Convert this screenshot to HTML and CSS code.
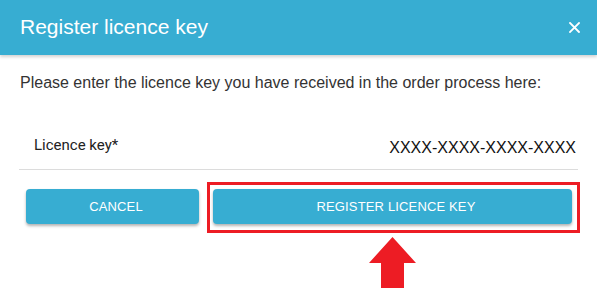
FILE: index.html
```html
<!DOCTYPE html>
<html lang="en">
<head>
<meta charset="utf-8">
<title>Register licence key</title>
<link rel="stylesheet" href="styles.css">
</head>
<body>
<div class="dialog">
  <header class="dlg-header">
    <h1 class="dlg-title">Register licence key</h1>
    <button class="dlg-close" aria-label="Close">
      <svg width="11" height="11" viewBox="0 0 11 11"><path d="M1 1 L10 10 M10 1 L1 10" stroke="#fff" stroke-width="1.8" stroke-linecap="square"/></svg>
    </button>
  </header>
  <p class="intro">Please enter the licence key you have received in the order process here:</p>
  <div class="field">
    <span class="field-label">Licence key*</span>
    <span class="field-value">XXXX-XXXX-XXXX-XXXX</span>
  </div>
  <div class="actions">
    <button class="btn btn-cancel">CANCEL</button>
    <div class="highlight">
      <button class="btn btn-register">REGISTER LICENCE KEY</button>
      <svg class="arrow" width="47" height="51" viewBox="0 0 47 51"><polygon points="23.5,0 47,26 35,26 35,51 12,51 12,26 0,26" fill="#ed1c24"/></svg>
    </div>
  </div>
</div>
</body>
</html>
```

FILE: styles.css
```css
* { box-sizing: border-box; }
html, body { margin: 0; padding: 0; background: #fff; }
body { width: 597px; height: 300px; overflow: hidden; font-family: "Liberation Sans", Arial, sans-serif; }

.dlg-header {
  height: 55px;
  background: #37add2;
  display: flex;
  align-items: center;
  justify-content: space-between;
  padding: 0 17px 2px 20px;
  box-shadow: 0 2px 3px rgba(0,0,0,0.18);
  position: relative;
}
.dlg-title {
  margin: 0;
  font-size: 21px;
  font-weight: normal;
  color: #fff;
  line-height: 24px;
}
.dlg-close {
  border: 0;
  background: none;
  padding: 0;
  width: 11px;
  height: 11px;
  display: flex;
  margin-top: 1px;
}

.intro {
  margin: 19px 0 0 20px;
  font-size: 16px;
  line-height: 18px;
  color: #333;
}

.field {
  margin: 44px 19px 0 19px;
  height: 34px;
  border-bottom: 1px solid #dcdcdc;
  display: flex;
  justify-content: space-between;
  align-items: flex-start;
}
.field-label {
  font-family: Roboto, "Liberation Sans", sans-serif;
  font-size: 15px;
  line-height: 18px;
  color: #222;
  padding-left: 15px;
}
.field-value {
  font-family: "Liberation Sans", Arial, sans-serif;
  font-size: 16px;
  line-height: 18px;
  color: #111;
  padding-right: 2px;
  margin-top: 3px;
}

.actions {
  margin: 12px 0 0 26px;
  display: flex;
  align-items: flex-start;
}
.btn {
  border: 0;
  border-radius: 4px;
  background: #37add2;
  color: #fff;
  font-family: "Liberation Sans", Arial, sans-serif;
  font-size: 13px;
  letter-spacing: 0.15px;
  height: 35px;
  padding: 0 0 0 7px;
  box-shadow: 0 2px 3px rgba(0,0,0,0.3);
}
.btn-cancel {
  width: 173px;
  margin-top: 7px;
}
.highlight {
  position: relative;
  margin-left: 8px;
  border: 3px solid #ed1c24;
  padding: 4px 5px 6px 3px;
}
.btn-register {
  width: 359px;
  display: block;
}
.arrow {
  position: absolute;
  left: 159px;
  top: 52px;
}
```
